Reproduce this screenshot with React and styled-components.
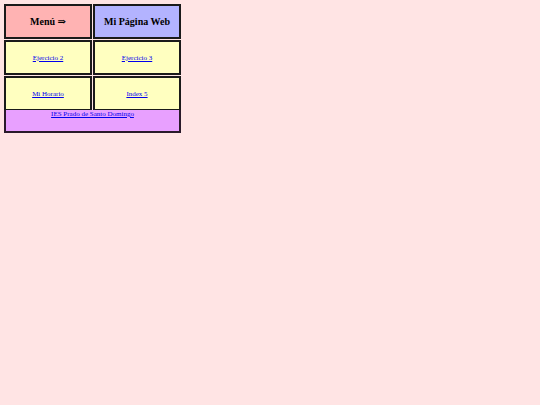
import React from "react";
import styled, { createGlobalStyle } from "styled-components";

const GlobalStyle = createGlobalStyle`
  html, body {
    margin: 0;
    background: #ffe4e4;
    font-family: "Liberation Serif", "DejaVu Serif", serif;
  }
`;

const Page = styled.div`
  padding: 4px;
`;

const Board = styled.div`
  display: grid;
  grid-template-columns: 88px 88px;
  grid-auto-rows: 35px;
  gap: 1px;
  width: 177px;
`;

const Cell = styled.div`
  box-sizing: border-box;
  border: 2px solid #1a1a1a;
  background: ${({ $bg }) => $bg};
  display: flex;
  align-items: center;
  justify-content: center;
`;

const Heading = styled.h3`
  margin: 0;
  font-size: 10px;
  font-weight: bold;
  color: #000;
`;

const Link = styled.a`
  font-size: 7px;
  color: #0000ee;
  text-decoration: underline;
`;

const Footer = styled.div`
  grid-column: 1 / span 2;
  box-sizing: border-box;
  height: 23px;
  margin-top: -2px;
  border: 2px solid #2a1a2a;
  border-top: none;
  background: #e8a0ff;
  text-align: center;
  font-size: 7px;
  line-height: 8px;
`;

const links = [
  ["Ejercicio 2", "Ejercicio 3"],
  ["Mi Horario", "Index 5"],
];

export default function App() {
  return (
    <>
      <GlobalStyle />
      <Page>
        <Board>
          <Cell $bg="#ffb3b3">
            <Heading>Menú ⇒</Heading>
          </Cell>
          <Cell $bg="#b3b3ff">
            <Heading>Mi Página Web</Heading>
          </Cell>
          {links.flat().map((text) => (
            <Cell key={text} $bg="#ffffc0">
              <Link href="#">{text}</Link>
            </Cell>
          ))}
          <Footer>
            <Link href="#">IES Prado de Santo Domingo</Link>
          </Footer>
        </Board>
      </Page>
    </>
  );
}
